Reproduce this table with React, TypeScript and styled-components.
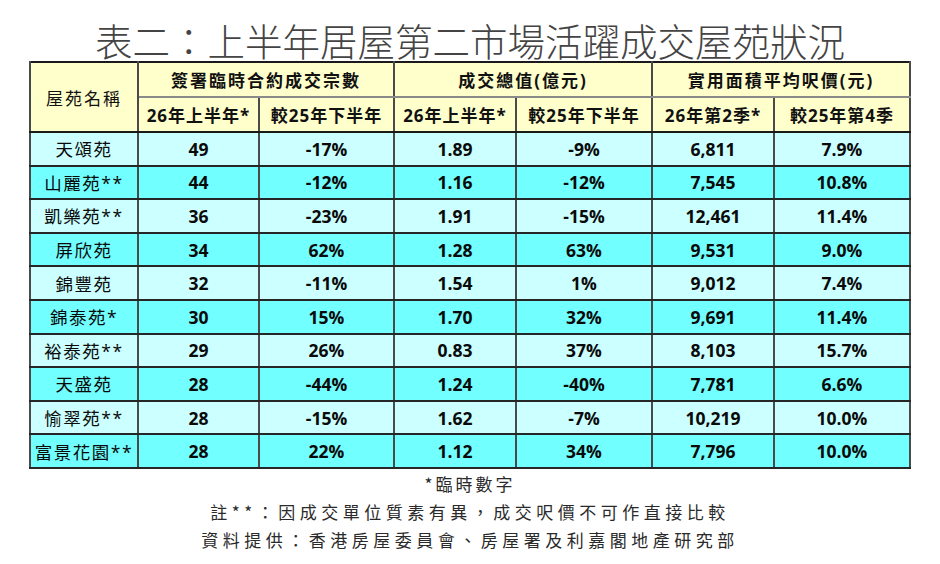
import React from "react";
import styled, { createGlobalStyle } from "styled-components";

type Row = {
  name: string;
  deals: string;
  dealsChange: string;
  value: string;
  valueChange: string;
  price: string;
  priceChange: string;
};

const rows: Row[] = [
  { name: "天頌苑", deals: "49", dealsChange: "-17%", value: "1.89", valueChange: "-9%", price: "6,811", priceChange: "7.9%" },
  { name: "山麗苑**", deals: "44", dealsChange: "-12%", value: "1.16", valueChange: "-12%", price: "7,545", priceChange: "10.8%" },
  { name: "凱樂苑**", deals: "36", dealsChange: "-23%", value: "1.91", valueChange: "-15%", price: "12,461", priceChange: "11.4%" },
  { name: "屏欣苑", deals: "34", dealsChange: "62%", value: "1.28", valueChange: "63%", price: "9,531", priceChange: "9.0%" },
  { name: "錦豐苑", deals: "32", dealsChange: "-11%", value: "1.54", valueChange: "1%", price: "9,012", priceChange: "7.4%" },
  { name: "錦泰苑*", deals: "30", dealsChange: "15%", value: "1.70", valueChange: "32%", price: "9,691", priceChange: "11.4%" },
  { name: "裕泰苑**", deals: "29", dealsChange: "26%", value: "0.83", valueChange: "37%", price: "8,103", priceChange: "15.7%" },
  { name: "天盛苑", deals: "28", dealsChange: "-44%", value: "1.24", valueChange: "-40%", price: "7,781", priceChange: "6.6%" },
  { name: "愉翠苑**", deals: "28", dealsChange: "-15%", value: "1.62", valueChange: "-7%", price: "10,219", priceChange: "10.0%" },
  { name: "富景花園**", deals: "28", dealsChange: "22%", value: "1.12", valueChange: "34%", price: "7,796", priceChange: "10.0%" },
];

const colWidths = [108, 121, 135, 122, 136, 122, 136];

export default function App() {
  return (
    <>
      <GlobalStyle />
      <Page>
        <Title>表二：上半年居屋第二市場活躍成交屋苑狀況</Title>
        <Table>
          <colgroup>
            {colWidths.map((w, i) => (
              <Col key={i} $width={w} />
            ))}
          </colgroup>
          <thead>
            <HeadRow>
              <HeadCell rowSpan={2} $plain>
                屋苑名稱
              </HeadCell>
              <HeadCell colSpan={2} $top>
                簽署臨時合約成交宗數
              </HeadCell>
              <HeadCell colSpan={2} $top>
                成交總值(億元)
              </HeadCell>
              <HeadCell colSpan={2} $top>
                實用面積平均呎價(元)
              </HeadCell>
            </HeadRow>
            <HeadRow>
              <HeadCell>26年上半年*</HeadCell>
              <HeadCell>較25年下半年</HeadCell>
              <HeadCell>26年上半年*</HeadCell>
              <HeadCell>較25年下半年</HeadCell>
              <HeadCell>26年第2季*</HeadCell>
              <HeadCell>較25年第4季</HeadCell>
            </HeadRow>
          </thead>
          <tbody>
            {rows.map((r, i) => (
              <DataRow key={r.name} $dark={i % 2 === 1}>
                <NameCell>{r.name}</NameCell>
                <NumCell>{r.deals}</NumCell>
                <NumCell>{r.dealsChange}</NumCell>
                <NumCell>{r.value}</NumCell>
                <NumCell>{r.valueChange}</NumCell>
                <NumCell>{r.price}</NumCell>
                <NumCell>{r.priceChange}</NumCell>
              </DataRow>
            ))}
          </tbody>
        </Table>
        <Notes>
          <Note $spacing={3}>*臨時數字</Note>
          <Note $spacing={4.5}>註**：因成交單位質素有異，成交呎價不可作直接比較</Note>
          <Note $spacing={4.5}>資料提供：香港房屋委員會、房屋署及利嘉閣地產研究部</Note>
        </Notes>
      </Page>
    </>
  );
}

const GlobalStyle = createGlobalStyle`
  body {
    margin: 0;
    background: #ffffff;
    font-family: "Noto Sans CJK TC", "Noto Sans", sans-serif;
  }
`;

const Page = styled.div`
  width: 940px;
  height: 564px;
  box-sizing: border-box;
  padding: 18px 30px 0;
  display: flex;
  flex-direction: column;
  align-items: center;
`;

const Title = styled.h1`
  margin: 0;
  height: 43px;
  line-height: 43px;
  font-size: 37.5px;
  font-weight: 300;
  color: #444444;
  white-space: nowrap;
`;

const Table = styled.table`
  width: 880px;
  border-collapse: collapse;
  table-layout: fixed;
  border: 2px solid #1a1a1a;
`;

const Col = styled.col<{ $width: number }>`
  width: ${(p) => p.$width}px;
`;

const HeadRow = styled.tr`
  height: 35px;
  background: #ffffcc;
`;

const HeadCell = styled.th<{ $top?: boolean; $plain?: boolean }>`
  padding: 0;
  text-align: center;
  vertical-align: middle;
  font-family: "Open Sans", "Noto Sans CJK TC", sans-serif;
  font-size: 17px;
  font-weight: ${(p) => (p.$plain ? 400 : 700)};
  letter-spacing: ${(p) => (p.$top || p.$plain ? "2px" : "1px")};
  color: #111111;
  white-space: nowrap;
  border-left: 2px solid #4a4a4a;
  border-right: 2px solid #4a4a4a;
  border-bottom: 2px solid ${(p) => (p.$top ? "#8a8a8a" : "#1a1a1a")};
`;

const DataRow = styled.tr<{ $dark: boolean }>`
  height: 33.6px;
  background: ${(p) => (p.$dark ? "#72ffff" : "#ccffff")};
`;

const Cell = styled.td`
  padding: 0;
  text-align: center;
  vertical-align: middle;
  color: #0a0a0a;
  white-space: nowrap;
  border: 2px solid #262626;
  border-left-color: #4a4a4a;
  border-right-color: #4a4a4a;
`;

const NameCell = styled(Cell)`
  font-family: "Open Sans", "Noto Sans CJK TC", sans-serif;
  font-size: 17.5px;
  font-weight: 400;
  letter-spacing: 1.5px;
`;

const NumCell = styled(Cell)`
  font-family: "Open Sans", "Noto Sans CJK TC", sans-serif;
  font-size: 17.5px;
  font-weight: 700;
`;

const Notes = styled.div`
  display: flex;
  flex-direction: column;
  align-items: center;
  gap: 2px;
  padding-top: 2px;
`;

const Note = styled.div<{ $spacing: number }>`
  font-family: "Noto Sans CJK TC", sans-serif;
  font-size: 17px;
  line-height: 26px;
  color: #2a2a2a;
  letter-spacing: ${(p) => p.$spacing}px;
  white-space: nowrap;
`;
